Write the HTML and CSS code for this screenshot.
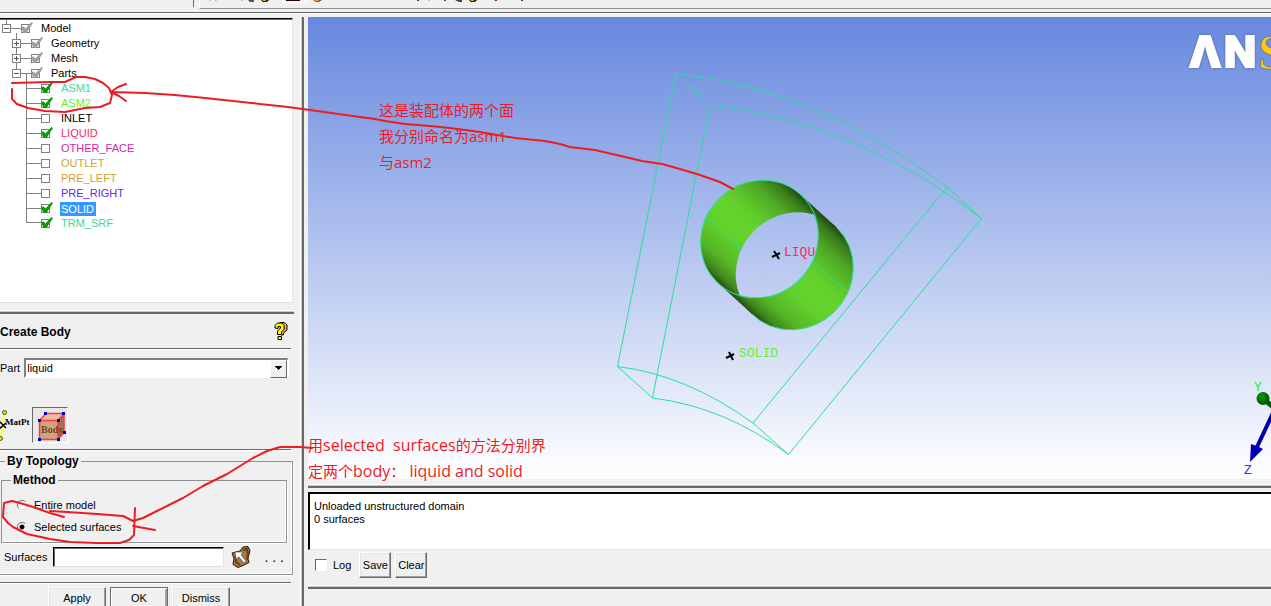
FILE: index.html
```html
<!DOCTYPE html>
<html lang="zh-CN">
<head>
<meta charset="utf-8">
<title>Create Body</title>
<link rel="stylesheet" href="styles.css">
</head>
<body>
<div class="app">
  <header class="toolbar">
    <div class="toolbar-left"></div>
    <div class="toolbar-right">
      <svg width="340" height="7" viewBox="200 0 340 7" aria-hidden="true">
        <path d="M210 0v1M216 0v1M242 0v1M429 0v1M495 0v1" stroke="#999"/>
        <path d="M248 0h6v2h-4z" fill="#555"/><path d="M261 0h8l-2 2h-4z" fill="#2b1a0a"/><path d="M263 0h3v1h-3z" fill="#e0a040"/>
        <path d="M282.500 3v-3M283 2.500h24v-2.500" stroke="#fff" fill="none"/><path d="M286 0h14v1h-14z" fill="#300"/>
        <path d="M313 0h9l-3 2h-3z" fill="#8a4a20"/><path d="M315 0h4v1h-4z" fill="#e8a050"/>
        <path d="M417 0h2v1h-2zM444 0h2v1h-2zM495 0h2v1h-2zM521 0h2v1h-2z" fill="#823"/>
        <path d="M455 0h7v2h-3z" fill="#444"/><path d="M469 0h8l-2 2h-4z" fill="#2b1a0a"/><path d="M471 0h3v1h-3z" fill="#e0a040"/>
      </svg>
    </div>
  </header>

  <main class="main">
    <aside class="side">
      <div class="tree">
        <svg class="tree-lines" width="60" height="212" viewBox="0 18 60 212" aria-hidden="true">
          <path d="M6.500 19v5M10 28.500h11M16.500 33v36M20 43.500h11M20 58.500h11M20 73.500h11M26.500 74v149M27 88.500h14M27 103.500h14M27 118.500h14M27 133.500h14M27 148.500h14M27 163.500h14M27 178.500h14M27 193.500h14M27 208.500h14M26 222.500h15" stroke="#808080" fill="none"/>
        </svg>
        <ul class="nodes">
          <li class="l0"><button class="exp minus" aria-label="Collapse Model"></button><label><input class="chk dim" type="checkbox" checked>Model</label></li>
          <li class="l1"><button class="exp plus" aria-label="Expand Geometry"></button><label><input class="chk dim" type="checkbox" checked>Geometry</label></li>
          <li class="l1"><button class="exp plus" aria-label="Expand Mesh"></button><label><input class="chk dim" type="checkbox" checked>Mesh</label></li>
          <li class="l1"><button class="exp minus" aria-label="Collapse Parts"></button><label><input class="chk dim" type="checkbox" checked>Parts</label></li>
          <li class="l2 aqua"><label><input class="chk" type="checkbox" checked>ASM1</label></li>
          <li class="l2 lime"><label><input class="chk" type="checkbox" checked>ASM2</label></li>
          <li class="l2"><label><input class="chk" type="checkbox">INLET</label></li>
          <li class="l2 pink"><label><input class="chk" type="checkbox" checked>LIQUID</label></li>
          <li class="l2 magenta"><label><input class="chk" type="checkbox">OTHER_FACE</label></li>
          <li class="l2 olive"><label><input class="chk" type="checkbox">OUTLET</label></li>
          <li class="l2 amber"><label><input class="chk" type="checkbox">PRE_LEFT</label></li>
          <li class="l2 violet"><label><input class="chk" type="checkbox">PRE_RIGHT</label></li>
          <li class="l2"><label><input class="chk" type="checkbox" checked><span class="selected">SOLID</span></label></li>
          <li class="l2 aqua"><label><input class="chk" type="checkbox" checked>TRM_SRF</label></li>
        </ul>
      </div>
      <div class="sash"></div>

      <div class="title">
        <h1>Create Body</h1>
        <button class="plain" aria-label="Help">
          <svg width="14" height="20" viewBox="0 0 14 20"><path d="M4 4L6 1.500h4.500L13 4v5l-3.500 3v2H7" fill="#f0a860" stroke="#000"/><path d="M1 7V4.500L3.500 2H8l2 2.500v4L7.500 11v2.500h-4V10L6.500 7V5.500H4V7.500z" fill="#ff0" stroke="#000"/><path d="M4 15.500h3.500v3H4z" fill="#ff0" stroke="#000"/></svg>
        </button>
      </div>
      <div class="rule"></div>
      <div class="part">
        <label for="part">Part</label>
        <div class="select-box">
          <select id="part"><option>liquid</option></select>
        </div>
      </div>
      <div class="kinds">
        <button class="plain matpt" aria-label="Material point">
          <svg width="32" height="36" viewBox="0 407 32 36"><path d="M4 414L1 437" stroke="#ffff40" stroke-width="2" stroke-dasharray="3 1"/><circle cx="4.500" cy="412.500" r="2" fill="#dddd20" stroke="#555500"/><circle cx="0.500" cy="438.500" r="2" fill="#dddd20" stroke="#555500"/><path d="M-1 421l7 7M-1 429l7-6" stroke="#000" stroke-width="1.500"/><text class="matpt-text" x="5" y="425">MatPt</text></svg>
        </button>
        <button class="plain body-btn" aria-label="Body" aria-pressed="true">
          <svg width="34" height="34" viewBox="33 408 34 34"><path d="M39.500 420.500l6.500-7h18l-6 7z" fill="#dfc0a0"/><path d="M58 420.500l6-7v19l-6 7z" fill="#9b7452"/><path d="M39.500 420.500H58v19H39.500z" fill="#cda27c"/><path d="M39.500 420.500H58v19H39.500zl6.500-7h18l-6 7M64 413.500v19l-6 7" fill="none" stroke="#ff3838" stroke-width="1.500"/><text class="body-text" x="41" y="433">Body</text><path d="M38 419h3v3h-3zM57 419h3v3h-3zM44 412h3v3h-3zM62 412h3v3h-3zM38 438h3v3h-3zM57 438h3v3h-3zM63 431h3v3h-3z" fill="#0000c0"/></svg>
        </button>
      </div>
      <div class="rule"></div>

      <fieldset class="group topology">
        <legend>By Topology</legend>
        <fieldset class="group method">
          <legend>Method</legend>
          <label><input type="radio" name="method">Entire model</label>
          <label><input type="radio" name="method" checked>Selected surfaces</label>
        </fieldset>
        <div class="surfaces">
          <label for="surf">Surfaces</label>
          <input id="surf" type="text">
          <button class="plain" aria-label="Select surfaces">
            <svg width="20" height="22" viewBox="0 0 20 22"><path d="M1 7l8-2 3-4 5-.500 2 4-2 8 1 4-6 3-5 2-5-3 1-6z" fill="#a67848" stroke="#2a1808"/><path d="M12 4l4-1 1 5-1 6M4 10l1 6 4 3" fill="none" stroke="#65401f" stroke-width="2"/><path d="M4 6l8 0-2 3 5 6-2 2-5-6-3 2z" fill="#fff" stroke="#555" stroke-width=".7"/></svg>
          </button>
          <button class="plain" aria-label="More">. . .</button>
        </div>
      </fieldset>
      <div class="rule"></div>
      <div class="actions">
        <button class="btn">Apply</button>
        <button class="btn default">OK</button>
        <button class="btn">Dismiss</button>
      </div>
    </aside>

    <div class="vsash"></div>

    <section class="work">
      <div class="viewport">
        <svg class="model" width="963" height="462" viewBox="308 17 963 462" role="img" aria-label="Model">
          <defs>
            <linearGradient id="shade" gradientUnits="userSpaceOnUse" x1="819" y1="209" x2="735" y2="301">
              <stop offset="0" stop-color="#1d3c0e"/><stop offset=".08" stop-color="#3a781b"/><stop offset=".2" stop-color="#4fa824"/><stop offset=".38" stop-color="#60cc2b"/><stop offset=".5" stop-color="#65d52d"/><stop offset=".64" stop-color="#62d02c"/><stop offset=".82" stop-color="#55b625"/><stop offset=".93" stop-color="#40851d"/><stop offset="1" stop-color="#1d3c0e"/>
            </linearGradient>
            <clipPath id="front"><ellipse cx="794.500" cy="271" rx="60.500" ry="57" transform="rotate(-45 794.500 271)"/></clipPath>
            <mask id="bore" maskUnits="userSpaceOnUse" x="690" y="170" width="180" height="170">
              <rect x="690" y="170" width="180" height="170" fill="#fff"/>
              <g clip-path="url(#front)"><ellipse cx="759.500" cy="239" rx="60.500" ry="57" transform="rotate(-45 759.500 239)" fill="#000"/></g>
            </mask>
          </defs>
          <g class="wire">
            <path d="M676 73.500Q814 87 947 187L981.500 218.500Q855 121 710 105L676 73.500L617.500 366.500L652.500 398L710 105"/>
            <path d="M617.500 366.500Q686 374.700 753 423L788.500 454.500Q725 407 652.500 398M753 423L947 187M788.500 454.500L981.500 218.500"/>
          </g>
          <text class="tag pink" x="784" y="256">LIQU</text>
          <g fill="url(#shade)" mask="url(#bore)">
            <path d="M759.500 239m43.300-42.300a60.500 57 -45 1 0-86.600 84.600a60.500 57 -45 1 0 86.600-84.600zM794.500 271m43.300-42.300a60.500 57 -45 1 0-86.600 84.600a60.500 57 -45 1 0 86.600-84.600z"/>
            <path d="M801 195L836 227L753 315L718 283z"/>
          </g>
          <g class="rim">
            <ellipse cx="759.500" cy="239" rx="60.500" ry="57" transform="rotate(-45 759.500 239)"/>
            <path d="M837.300 228.200A60.500 57 -45 0 1 751.700 313.800M707 217L741 249M813 261L847 292"/>
          </g>
          <path class="cross" d="M772 257l8-4M774 251l5 8M726 358l8-4M729 352l4 8"/>
          <text class="tag lime" x="739" y="357">SOLID</text>
        </svg>
        <svg class="logo" width="84" height="40" viewBox="1187 32 84 40" role="img" aria-label="ANSYS"><text class="logo-a" x="1189" y="67">Λ</text><text class="logo-a" x="1224" y="67">N</text><text class="logo-s" x="1258" y="69">S</text></svg>
        <svg class="triad" width="31" height="98" viewBox="1240 378 31 98" role="img" aria-label="Axes">
          <defs><radialGradient id="ball" cx=".4" cy=".35"><stop offset="0" stop-color="#129b12"/><stop offset="1" stop-color="#006000"/></radialGradient></defs>
          <path d="M1265 400l8 7" stroke="#065806" stroke-width="5"/><circle cx="1263" cy="398.500" r="6.500" fill="url(#ball)"/>
          <path d="M1257 447L1273 413" stroke="#0000a8" stroke-width="4"/><path d="M1250 462l1-18 6 2 6 3z" fill="#0000b0"/>
          <text class="tag axis-y" x="1254" y="391">Y</text><text class="tag axis-z" x="1244" y="474">Z</text>
        </svg>
      </div>
      <div class="sash"></div>
      <div class="log" role="log">Unloaded unstructured domain<br>0 surfaces</div>
      <div class="log-bar">
        <label><input class="box" type="checkbox">Log</label>
        <button class="btn">Save</button>
        <button class="btn">Clear</button>
      </div>
      <div class="sash"></div>
      <div class="status"></div>
    </section>
  </main>

  <p class="note note-faces">这是装配体的两个面<br>我分别命名为asm1<br>与asm2</p>
  <p class="note note-body">用<span class="latin">selected&nbsp; surfaces</span>的方法分别界<br>定两个<span class="latin">body</span>：<span class="latin"> liquid and solid</span></p>
  <svg class="ink" width="740" height="560" viewBox="0 0 740 560" aria-hidden="true">
    <path d="M12 83L50 82L65 82L76 77L85 77L95 79L103 83L109 88L112 95L110 103L100 107L85 108L75 110L65 112L45 111L28 108L17 104L12 99L12 89"/>
    <path d="M126 84L118 87L111 92L119 96L126 101M111 92L145 93L175 95L205 98L260 104L288 107L310 110L360 117L375 119L385 121L405 124L430 126L450 128L480 132L515 138L545 141L560 144L570 147L595 150L625 157L642 161L662 164L680 169L700 175L720 182L733 189"/>
    <path d="M64 517L50 513L33 507L20 503L12 501L4 503L3 517L8 523L13 527L27 534L50 539L70 542L97 543L120 543L129 540L134 535L135 508"/>
    <path d="M50 511L67 512L97 514L123 516L133 521L143 518L157 511L183 498L203 486L227 474L253 458L267 451L280 447L300 447L312 448M133 526L155 530"/>
  </svg>
</div>
</body>
</html>
```
FILE: styles.css
```css
* { box-sizing: border-box; }
body { margin: 0; background: #f0f0f0; color: #000; font: 11px/15px "Liberation Sans", Arial, sans-serif; }
button, input, select { font: inherit; color: inherit; }
.app { position: relative; height: 100vh; display: flex; flex-direction: column; overflow: hidden; }

.toolbar { display: flex; gap: 5px; height: 14px; flex: none; border-bottom: 1px solid #fff; box-shadow: inset 0 -1px #696969; }
.toolbar-left { width: 194px; height: 7px; border-right: 1px solid #696969; }
.toolbar-right { flex: 1; height: 9px; border-left: 1px solid #fff; border-bottom: 1px solid #909090; }
.toolbar svg { display: block; }

.main { flex: 1; min-height: 0; display: flex; }
.side { width: 300px; flex: none; padding-top: 4px; }
.vsash { width: 4px; flex: none; margin-top: 3px; border-left: 1px solid #fff; border-right: 2px solid #696969; background: #c8c8c8; }
.work { flex: 1; min-width: 0; display: flex; flex-direction: column; padding: 3px 0 0 4px; }

.tree { position: relative; height: 285px; margin-right: 7px; background: #fff; border-top: 1px solid #000; border-bottom: 1px solid #e3e3e3; border-right: 1px solid #e3e3e3; box-shadow: inset 0 1px #696969; }
.tree-lines { position: absolute; left: 0; top: -1px; }
.nodes { position: relative; list-style: none; margin: 0; padding: 2px 0 0; }
.nodes li { height: 15px; display: flex; align-items: center; gap: 10px; }
.l0 { padding-left: 2px; }
.l1 { padding-left: 12px; }
.l2 { padding-left: 41px; }
.nodes label { display: flex; align-items: center; gap: 11px; }
.exp { width: 9px; height: 9px; flex: none; padding: 0; border: 1px solid #808080; }
.exp.minus { background: linear-gradient(#555, #555) center / 5px 1px no-repeat #fff; }
.exp.plus { background: linear-gradient(#555, #555) center / 5px 1px no-repeat, linear-gradient(#555, #555) center / 1px 5px no-repeat, #fff; }
.chk { appearance: none; position: relative; width: 9px; height: 9px; flex: none; margin: 0; border: 1px solid #808080; background: #fff; }
.chk:checked::before { content: ""; position: absolute; left: -1px; top: -3px; width: 12px; height: 11px; background: #0a9a0a; clip-path: polygon(0 45%, 24% 42%, 36% 58%, 88% 0, 100% 8%, 46% 100%, 20% 100%); }
.chk.dim:checked::before { background: #a0a0a0; }
.selected { background: #3399ff; color: #fff; line-height: 14px; padding: 0 2px 0 1px; margin-left: -1px; }
.aqua { color: #2fe09a; }
.lime { color: #6bed2c; fill: #6bed2c; }
.pink { color: #f52b66; fill: #f52b66; }
.magenta { color: #cf2ba6; }
.olive { color: #c4ab2c; }
.amber { color: #d39d30; }
.violet { color: #642bf0; }

.sash { height: 4px; flex: none; border-top: 1px solid #fff; border-bottom: 2px solid #696969; background: #c8c8c8; }
.side .sash { margin: 7px 6px 0 0; }
.title { display: flex; align-items: center; justify-content: space-between; height: 34px; padding-right: 12px; }
h1 { margin: 2px 0 0; font-size: 12px; line-height: 15px; }
.plain { border: 0; padding: 0; background: none; }
.plain svg { display: block; }
.rule { height: 2px; margin-right: 9px; border-top: 1px solid #696969; border-bottom: 1px solid #fff; }
.part { display: flex; align-items: center; gap: 4px; height: 20px; margin: 8px 11px 0 0; }
.select-box { position: relative; flex: 1; display: flex; height: 20px; border: 2px solid; border-color: #808080 #fff #fff #808080; background: #fff; }
.select-box::after { content: ""; position: absolute; right: 0; top: 0; width: 15px; height: 16px; pointer-events: none; border: 1px solid; border-color: #fff #696969 #696969 #fff; background: linear-gradient(#000, #000) 4px 5px / 7px 1px no-repeat, linear-gradient(#000, #000) 5px 6px / 5px 1px no-repeat, linear-gradient(#000, #000) 6px 7px / 3px 1px no-repeat, linear-gradient(#000, #000) 7px 8px / 1px 1px no-repeat, #f0f0f0; }
.select-box select { flex: 1; appearance: none; border: 0; padding: 0 1px; background: #fff; }
.kinds { display: flex; align-items: center; height: 36px; margin: 29px 0 6px; }
.matpt { width: 32px; }
.matpt-text { font: bold 9px "Liberation Serif", serif; }
.body-btn { border: 1px solid; border-color: #696969 #fff #fff #696969; background: #e8e8e8; }
.body-text { font: bold 10px "Liberation Serif", serif; fill: #6b4a2b; }

.group { min-width: 0; margin: 0; padding: 0; border: 1px solid #909090; box-shadow: inset -1px -1px #fff, 1px 1px #fff; }
.group legend { padding: 0 2px; font-size: 12px; font-weight: bold; line-height: 15px; }
.topology { margin: 3px 7px 7px -2px; height: 121px; }
.topology > legend { margin-left: 6px; }
.method { margin: 4px 5px 0 2px; height: 70px; }
.method > legend { margin-left: 9px; }
.method label { display: flex; align-items: center; gap: 7px; height: 22px; padding-left: 15px; }
.method label:first-of-type { margin-top: 6px; }
.method input { appearance: none; width: 10px; height: 10px; margin: 0; border-radius: 50%; border: 1px solid; border-color: #707070 #ddd #ddd #707070; background: #fff; }
.method input:checked { background: radial-gradient(#000 2px, #fff 3px); }
.surfaces { display: flex; align-items: center; height: 22px; margin-top: 3px; padding: 0 8px 0 5px; }
.surfaces input { flex: 1; min-width: 0; height: 20px; margin: 0 7px 0 6px; border: 1px solid; border-color: #000 #e3e3e3 #e3e3e3 #000; box-shadow: inset 1px 1px #696969; background: #fff; }
.surfaces .plain + .plain { margin-left: 14px; white-space: pre; font-size: 14px; }
.actions { display: flex; gap: 4px; margin-top: 3px; padding-left: 48px; }
.btn { height: 22px; padding: 0; border: 1px solid; border-color: #fff #696969 #696969 #fff; box-shadow: inset -1px -1px #a0a0a0, inset 1px 1px #e3e3e3; background: #f0f0f0; }
.actions .btn { width: 58px; }
.actions .default { border-color: #696969; box-shadow: inset 1px 1px #fff, inset -2px -2px #a0a0a0; }

.viewport { position: relative; flex: 1; min-height: 0; overflow: hidden; background: linear-gradient(#6688de, #fff); }
.model { position: absolute; left: 0; top: 0; }
.logo { position: absolute; right: 0; top: 15px; }
.triad { position: absolute; right: 0; bottom: 3px; }
.wire, .rim { fill: none; stroke: #28e09a; stroke-width: 1; }
.cross { stroke: #000; stroke-width: 2; }
.tag { font: 13px "Liberation Mono", monospace; }
.axis-y { fill: #18f018; }
.axis-z { fill: #2030ff; }
.logo-a { font: 800 42px Inter, sans-serif; fill: #fff; stroke: #fff; stroke-width: 2; filter: drop-shadow(0 0 1px #4a5c90); }
.logo-s { font: bold 50px "Liberation Serif", serif; fill: #ffcb05; stroke: #6a7cae; stroke-width: 1; }

.work > .sash { margin-top: 5px; }
.log { height: 58px; flex: none; margin-top: 4px; padding: 6px 4px; line-height: 13px; background: #fff; border: solid; border-width: 2px 0 1px 2px; border-color: #000 #e3e3e3 #e3e3e3 #000; }
.log-bar { display: flex; align-items: center; gap: 4px; height: 26px; margin-top: 2px; flex: none; padding-left: 7px; }
.log-bar label { display: flex; align-items: center; gap: 6px; margin-right: 4px; }
.box { appearance: none; width: 12px; height: 12px; margin: 0; border: 1px solid; border-color: #696969 #fff #fff #696969; background: #fff; }
.log-bar .btn { width: 32px; height: 26px; }
.work > .log-bar + .sash { margin-top: 7px; }
.status { height: 17px; flex: none; }

.note { position: absolute; margin: 0; color: #ed1c24; font: 15px/26px "Open Sans", "Noto Sans CJK SC", sans-serif; white-space: nowrap; }
.latin { font-size: 16px; line-height: 20px; }
.note-faces { left: 379px; top: 97px; }
.note-body { left: 308px; top: 432px; }
.ink { position: absolute; left: 0; top: 0; pointer-events: none; fill: none; stroke: #ed1c24; stroke-width: 2; stroke-linejoin: round; stroke-linecap: round; }
```
